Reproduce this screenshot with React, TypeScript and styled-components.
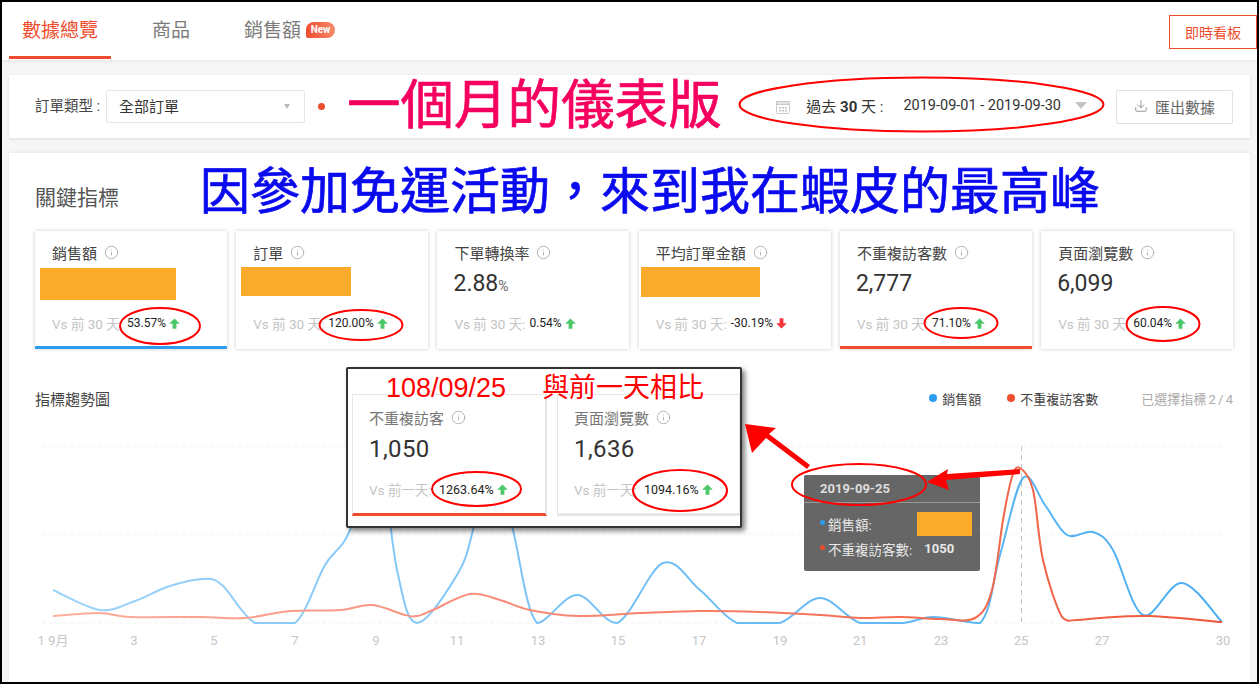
import React from 'react';
import styled, { createGlobalStyle } from 'styled-components';
import { Download, Info } from 'lucide-react';

const GlobalStyle = createGlobalStyle`
  html, body {
    margin: 0;
    padding: 0;
    background: #fff;
    overflow: hidden;
  }
  * {
    box-sizing: border-box;
  }
`;

const orange = '#ee4d2d';
const blue = '#2b9cf0';
const redact = '#fbab2a';
const sansStack = 'Roboto, "Noto Sans CJK TC", sans-serif';

type Point = [number, number];

const BASELINE = 623;

const salesLine: Point[] = [
  [53, 590], [100, 610], [135, 601], [167, 587], [202, 579], [222, 585], [255, 623], [295, 623],
  [325, 565], [350, 530], [376, 440], [397, 570], [417, 623], [457, 575], [473, 530], [492, 440],
  [513, 530], [537, 623], [577, 595], [617, 623], [663, 563], [700, 590], [737, 623], [780, 623],
  [820, 598], [860, 623], [903, 623], [933, 617], [980, 623], [1000, 555], [1023, 478], [1045, 505],
  [1067, 535], [1093, 532], [1113, 550], [1143, 615], [1182, 583], [1222, 622],
];

const visitorLine: Point[] = [
  [53, 616], [100, 613], [130, 617], [200, 617], [245, 618], [290, 611], [340, 610], [372, 605],
  [405, 615], [417, 616], [433, 610], [470, 594], [500, 600], [530, 610], [578, 616], [640, 613],
  [700, 611], [760, 612], [820, 615], [860, 618], [900, 617], [940, 619], [975, 618], [992, 590],
  [1003, 520], [1012, 477], [1020, 468], [1033, 490], [1043, 560], [1062, 617], [1077, 620],
  [1100, 618], [1150, 616], [1222, 622],
];

// catmull-rom through the points, control points kept above the axis
const toPath = (pts: Point[]) => {
  let d = `M${pts[0][0]} ${pts[0][1]}`;
  for (let i = 0; i < pts.length - 1; i++) {
    const p0 = pts[Math.max(i - 1, 0)];
    const p1 = pts[i];
    const p2 = pts[i + 1];
    const p3 = pts[Math.min(i + 2, pts.length - 1)];
    const c1x = p1[0] + (p2[0] - p0[0]) / 6;
    const c1y = Math.min(p1[1] + (p2[1] - p0[1]) / 6, BASELINE);
    const c2x = p2[0] - (p3[0] - p1[0]) / 6;
    const c2y = Math.min(p2[1] - (p3[1] - p1[1]) / 6, BASELINE);
    d += ` C${c1x.toFixed(1)} ${c1y.toFixed(1)} ${c2x.toFixed(1)} ${c2y.toFixed(1)} ${p2[0]} ${p2[1]}`;
  }
  return d;
};

const axisLabels: [string, number][] = [
  ['1 9月', 53], ['3', 134], ['5', 214], ['7', 295], ['9', 376], ['11', 457], ['13', 538], ['15', 618],
  ['17', 699], ['19', 780], ['21', 860], ['23', 941], ['25', 1021], ['27', 1102], ['30', 1223],
];

interface Metric {
  label: string;
  value?: string;
  unit?: string;
  redact?: { width: number; height: number; top: number; left: number };
  change: string;
  down?: boolean;
  bar?: string;
}

const metrics: Metric[] = [
  { label: '銷售額', redact: { width: 136, height: 32, top: 3, left: -12 }, change: '53.57%', bar: blue },
  { label: '訂單', redact: { width: 110, height: 29, top: 2, left: -12 }, change: '120.00%' },
  { label: '下單轉換率', value: '2.88', unit: '%', change: '0.54%' },
  { label: '平均訂單金額', redact: { width: 119, height: 30, top: 2, left: -15 }, change: '-30.19%', down: true },
  { label: '不重複訪客數', value: '2,777', change: '71.10%', bar: orange },
  { label: '頁面瀏覽數', value: '6,099', change: '60.04%' },
];

const ellipses = [
  [921.5, 104.5, 182, 27],
  [160, 326, 40, 18],
  [361, 325, 41.5, 15],
  [961, 323, 36.5, 15],
  [1163, 324, 36.5, 17],
  [476.5, 489, 44.5, 17],
  [680, 490.5, 47, 20.5],
  [859, 484.5, 67, 20.5],
];

const ChangeArrow = ({ down }: { down?: boolean }) => (
  <ArrowIcon viewBox="0 0 11 11" $down={down}>
    <path d="M5.5 0.5 L10.8 5.8 H7.4 V10.8 H3.6 V5.8 H0.2 Z" />
  </ArrowIcon>
);

const CalendarIcon = () => (
  <svg width="14" height="14" viewBox="0 0 14 14">
    <rect x="0.5" y="1.5" width="13" height="12" rx="1" fill="#fff" stroke="#c9c9c9" />
    <rect x="0.5" y="1.5" width="13" height="3" fill="#e2e2e2" stroke="#c9c9c9" />
    <path d="M3 7h2v1.5H3zM6 7h2v1.5H6zM9 7h2v1.5H9zM3 10h2v1.5H3zM6 10h2v1.5H6zM9 10h2v1.5H9z" fill="#c2c2c2" />
  </svg>
);

const MetricCard = ({ metric }: { metric: Metric }) => (
  <Card $bar={metric.bar}>
    <CardLabel>
      {metric.label}
      <Info size={15} strokeWidth={1.4} color="#aaa" />
    </CardLabel>
    <CardValue>
      {metric.redact ? (
        <Redaction
          $width={metric.redact.width}
          $height={metric.redact.height}
          $top={metric.redact.top}
          $left={metric.redact.left}
        />
      ) : (
        <>
          {metric.value}
          {metric.unit && <Unit>{metric.unit}</Unit>}
        </>
      )}
    </CardValue>
    <CardFooter>
      <VsText>Vs 前 30 天:</VsText>
      <ChangeText>{metric.change}</ChangeText>
      <ChangeArrow down={metric.down} />
    </CardFooter>
  </Card>
);

const Chart = () => (
  <ChartSvg viewBox="35 430 1198 220" width="1198" height="220">
    <defs>
      <linearGradient id="salesStroke" gradientUnits="userSpaceOnUse" x1="53" y1="0" x2="1222" y2="0">
        <stop offset="0" stopColor="#9cd3fa" />
        <stop offset="1" stopColor="#4aaef2" />
      </linearGradient>
      <linearGradient id="visitorStroke" gradientUnits="userSpaceOnUse" x1="53" y1="0" x2="1222" y2="0">
        <stop offset="0" stopColor="#ffae9f" />
        <stop offset="1" stopColor="#ef5638" />
      </linearGradient>
    </defs>
    {[446, 534, 623].map((y) => (
      <line key={y} x1="42" x2="1222" y1={y} y2={y} stroke="#f3f3f3" strokeDasharray="4 3" />
    ))}
    <line x1="1021.5" x2="1021.5" y1="446" y2="623" stroke="#c4c4c4" strokeDasharray="5 4" />
    <path d={toPath(salesLine)} fill="none" stroke="url(#salesStroke)" strokeWidth="2" />
    <path d={toPath(visitorLine)} fill="none" stroke="url(#visitorStroke)" strokeWidth="2" />
    {axisLabels.map(([text, x]) => (
      <AxisLabel key={text} x={x} y={645} textAnchor="middle">
        {text}
      </AxisLabel>
    ))}
  </ChartSvg>
);

const App = () => {
  return (
    <Page>
      <GlobalStyle />
      <Frame>
        <TabBar>
          <Tab $active>數據總覽</Tab>
          <Tab>商品</Tab>
          <Tab>
            銷售額
            <NewBadge>New</NewBadge>
          </Tab>
          <LiveButton>即時看板</LiveButton>
        </TabBar>

        <FilterBar>
          <FilterLabel>訂單類型 :</FilterLabel>
          <SelectBox>
            全部訂單
            <SmallCaret />
          </SelectBox>
          <StatusDot />
          <MonthNote>一個月的儀表版</MonthNote>
          <DateRange>
            <CalendarIcon />
            <DateLabel>
              過去 <b>30</b> 天 :
            </DateLabel>
            <DateValue>2019-09-01 - 2019-09-30</DateValue>
            <BigCaret />
          </DateRange>
          <ExportButton>
            <Download size={14} strokeWidth={1.5} color="#888" />
            匯出數據
          </ExportButton>
        </FilterBar>

        <MainPanel>
          <KeyRow>
            <SectionTitle>關鍵指標</SectionTitle>
            <PeakNote>因參加免運活動，來到我在蝦皮的最高峰</PeakNote>
          </KeyRow>
          <CardGrid>
            {metrics.map((metric) => (
              <MetricCard key={metric.label} metric={metric} />
            ))}
          </CardGrid>
          <TrendHeader>
            <TrendTitle>指標趨勢圖</TrendTitle>
            <Legend>
              <LegendDot $color={blue} />
              銷售額
            </Legend>
            <Legend>
              <LegendDot $color={orange} />
              不重複訪客數
            </Legend>
            <Selected>已選擇指標 2 / 4</Selected>
          </TrendHeader>
          <Chart />
        </MainPanel>
      </Frame>

      <ChartTooltip>
        <TooltipDate>2019-09-25</TooltipDate>
        <TooltipRow>
          <TooltipDot $color={blue} />
          銷售額:
          <TooltipRedaction />
        </TooltipRow>
        <TooltipRow>
          <TooltipDot $color={orange} />
          不重複訪客數:
          <TooltipValue>1050</TooltipValue>
        </TooltipRow>
      </ChartTooltip>

      <InsetShot>
        <InsetHeadline>
          <span>108/09/25</span>
          <span>與前一天相比</span>
        </InsetHeadline>
        <InsetCards>
          <InsetCard $width={195} $bar={orange}>
            <InsetLabel>
              不重複訪客
              <Info size={15} strokeWidth={1.4} color="#aaa" />
            </InsetLabel>
            <InsetValue>1,050</InsetValue>
            <InsetFooter>
              <VsText>Vs 前一天:</VsText>
              <InsetChange>1263.64%</InsetChange>
              <ChangeArrow />
            </InsetFooter>
          </InsetCard>
          <InsetCard $width={184}>
            <InsetLabel>
              頁面瀏覽數
              <Info size={15} strokeWidth={1.4} color="#aaa" />
            </InsetLabel>
            <InsetValue>1,636</InsetValue>
            <InsetFooter>
              <VsText>Vs 前一天:</VsText>
              <InsetChange>1094.16%</InsetChange>
              <ChangeArrow />
            </InsetFooter>
          </InsetCard>
        </InsetCards>
      </InsetShot>

      <Markup viewBox="0 0 1259 684" width="1259" height="684">
        {ellipses.map(([cx, cy, rx, ry]) => (
          <ellipse key={cx} cx={cx} cy={cy} rx={rx} ry={ry} fill="none" stroke="#f00" strokeWidth="2" />
        ))}
        <polygon points="1020,469 1020,474 946,480 949,490 927,482 948,469 947,474" fill="#f00" />
        <polygon points="810,465 807,469 766,438 752,453 745,424 776,428 769,434" fill="#f00" />
      </Markup>
    </Page>
  );
};

const Page = styled.div`
  position: relative;
  width: 1259px;
  height: 684px;
  overflow: hidden;
  font-family: ${sansStack};
`;

const Frame = styled.div`
  display: flex;
  flex-direction: column;
  height: 684px;
  border-style: solid;
  border-color: #000;
  border-width: 2px;
  background: #f6f6f6;
`;

const TabBar = styled.div`
  display: flex;
  gap: 28px;
  height: 58px;
  padding-left: 7px;
  background: #fff;
  box-shadow: 0 1px 3px rgba(0, 0, 0, 0.08);
`;

const Tab = styled.div<{ $active?: boolean }>`
  display: flex;
  align-items: center;
  height: 57px;
  padding: 0 13px 2px;
  font-size: 19px;
  color: ${(p) => (p.$active ? orange : '#7b7b7b')};
  border-bottom: 3px solid ${(p) => (p.$active ? orange : 'transparent')};
`;

const NewBadge = styled.span`
  align-self: flex-start;
  margin: 20px 0 0 5px;
  width: 29px;
  height: 16px;
  border-radius: 8px 8px 8px 2px;
  background: linear-gradient(90deg, #ee4d2d, #f58a6c);
  color: #fff;
  font-size: 10px;
  font-weight: 700;
  line-height: 16px;
  text-align: center;
`;

const LiveButton = styled.div`
  display: flex;
  align-items: center;
  justify-content: center;
  width: 88px;
  height: 34px;
  margin: 13px 0 0 auto;
  border: 1px solid ${orange};
  color: ${orange};
  font-size: 14px;
`;

const FilterBar = styled.div`
  display: flex;
  align-items: center;
  height: 63px;
  margin: 15px 7px 0;
  padding: 0 17px 0 26px;
  background: #fff;
  box-shadow: 0 1px 3px rgba(0, 0, 0, 0.1);
`;

const FilterLabel = styled.div`
  width: 71px;
  padding-bottom: 5px;
  font-size: 14.5px;
  color: #444;
  white-space: nowrap;
`;

const SelectBox = styled.div`
  position: relative;
  display: flex;
  align-items: center;
  width: 199px;
  height: 33px;
  padding: 0 0 3px 12px;
  border: 1px solid #e6e6e6;
  border-radius: 2px;
  font-size: 15px;
  color: #333;
`;

const SmallCaret = styled.i`
  position: absolute;
  right: 14px;
  top: 13px;
  border-style: solid;
  border-width: 5px 3.5px 0;
  border-color: #bbb transparent transparent;
`;

const StatusDot = styled.span`
  flex: none;
  width: 7px;
  height: 7px;
  margin-left: 13px;
  border-radius: 50%;
  background: ${orange};
`;

const MonthNote = styled.div`
  margin: 0 0 12px 22px;
  font-family: "Noto Sans CJK TC", sans-serif;
  font-size: 53.5px;
  font-weight: 400;
  line-height: 53px;
  -webkit-text-stroke: 0.7px #f5005f;
  color: #f5005f;
  white-space: nowrap;
`;

const DateRange = styled.div`
  display: flex;
  align-items: center;
  margin: 0 29px 0 auto;
  color: #333;
  font-size: 15px;
`;

const DateLabel = styled.span`
  margin: 0 0 3px 16px;
  white-space: nowrap;
  b {
    font-weight: 700;
  }
`;

const DateValue = styled.span`
  margin: 0 0 3px 20px;
  font-size: 14.5px;
  white-space: nowrap;
`;

const BigCaret = styled.i`
  margin: 0 0 3px 14px;
  border-style: solid;
  border-width: 7px 6px 0;
  border-color: #c4c4c4 transparent transparent;
`;

const ExportButton = styled.div`
  display: flex;
  align-items: center;
  justify-content: center;
  gap: 7px;
  width: 117px;
  height: 34px;
  padding-bottom: 1px;
  border: 1px solid #e2e2e2;
  border-radius: 2px;
  font-size: 15px;
  color: #666;
`;

const MainPanel = styled.div`
  flex: 1;
  margin: 15px 7px 0;
  padding: 14px 17px 0 26px;
  background: #fff;
  box-shadow: 0 -1px 3px rgba(0, 0, 0, 0.06);
`;

const KeyRow = styled.div`
  display: flex;
  height: 64px;
`;

const SectionTitle = styled.div`
  width: 165px;
  margin-top: 18px;
  font-size: 21px;
  line-height: 26px;
  color: #555;
`;

const PeakNote = styled.div`
  margin-top: -5px;
  font-family: "Noto Sans CJK TC", sans-serif;
  font-size: 50px;
  font-weight: 400;
  line-height: 50px;
  -webkit-text-stroke: 0.7px #0a0aee;
  color: #0a0aee;
  white-space: nowrap;
`;

const CardGrid = styled.div`
  display: grid;
  grid-template-columns: repeat(6, 1fr);
  gap: 9.4px;
`;

const Card = styled.div<{ $bar?: string }>`
  height: 118px;
  padding: 11px 0 0 17px;
  background: #fff;
  box-shadow: 0 0 4px rgba(0, 0, 0, 0.2);
  border-bottom: 3px solid ${(p) => p.$bar || 'transparent'};
`;

const CardLabel = styled.div`
  display: flex;
  align-items: center;
  gap: 7px;
  height: 20px;
  font-size: 15px;
  color: #444;
  white-space: nowrap;
`;

const CardValue = styled.div`
  height: 41px;
  padding-top: 3px;
  margin-left: -1px;
  font-size: 23px;
  line-height: 38px;
  color: #333;
`;

const Unit = styled.span`
  font-size: 14px;
  color: #666;
`;

const Redaction = styled.div<{ $width: number; $height: number; $top: number; $left: number }>`
  width: ${(p) => p.$width}px;
  height: ${(p) => p.$height}px;
  margin: ${(p) => p.$top}px 0 0 ${(p) => p.$left + 1}px;
  background: ${redact};
`;

const CardFooter = styled.div`
  display: flex;
  align-items: center;
  height: 20px;
  margin-top: 10px;
`;

const VsText = styled.span`
  width: 75px;
  flex: none;
  font-size: 13.5px;
  color: #c4c4c4;
  white-space: nowrap;
`;

const ChangeText = styled.span`
  font-size: 12px;
  color: #222;
`;

const ArrowIcon = styled.svg<{ $down?: boolean }>`
  flex: none;
  width: 11px;
  height: 11px;
  margin-left: 3px;
  fill: ${(p) => (p.$down ? '#f5333f' : '#4cc76a')};
  transform: ${(p) => (p.$down ? 'rotate(180deg)' : 'none')};
`;

const TrendHeader = styled.div`
  display: flex;
  align-items: center;
  height: 20px;
  margin-top: 39px;
  font-size: 13px;
  color: #444;
`;

const TrendTitle = styled.div`
  margin-right: auto;
  font-size: 15px;
  color: #444;
`;

const Legend = styled.div`
  display: flex;
  align-items: center;
  gap: 5px;
  margin-right: 26px;
`;

const LegendDot = styled.span<{ $color: string }>`
  width: 8px;
  height: 8px;
  border-radius: 50%;
  background: ${(p) => p.$color};
`;

const Selected = styled.div`
  margin-left: 17px;
  color: #aaa;
  word-spacing: -1px;
`;

const ChartSvg = styled.svg`
  display: block;
  margin-top: 22px;
`;

const AxisLabel = styled.text`
  font-family: ${sansStack};
  font-size: 13px;
  fill: #c6c6c6;
`;

const ChartTooltip = styled.div`
  position: absolute;
  left: 804px;
  top: 475px;
  width: 176px;
  height: 96px;
  border-radius: 2px;
  background: #666;
  color: #e8e8e8;
  font-size: 13.5px;
`;

const TooltipDate = styled.div`
  height: 28px;
  padding: 6px 0 0 16px;
  border-bottom: 1px solid #999;
  font-size: 13px;
  font-weight: 700;
  line-height: 16px;
  color: #ddd;
`;

const TooltipRow = styled.div`
  position: relative;
  display: flex;
  align-items: center;
  height: 25px;
  top: 8px;
  padding-left: 24px;
  white-space: nowrap;
`;

const TooltipDot = styled.span<{ $color: string }>`
  position: absolute;
  left: 16px;
  top: 9px;
  width: 5px;
  height: 5px;
  border-radius: 50%;
  background: ${(p) => p.$color};
`;

const TooltipRedaction = styled.span`
  position: absolute;
  left: 113px;
  top: 1px;
  width: 55px;
  height: 24px;
  background: ${redact};
`;

const TooltipValue = styled.span`
  margin-left: 12px;
  font-size: 13px;
  font-weight: 700;
`;

const InsetShot = styled.div`
  position: absolute;
  left: 346px;
  top: 367px;
  width: 396px;
  height: 161px;
  padding: 0 0 0 4px;
  border: 2px solid #333;
  border-radius: 2px;
  background: #fff;
  box-shadow: 3px 3px 5px rgba(0, 0, 0, 0.5);
  overflow: hidden;
`;

const InsetHeadline = styled.div`
  position: relative;
  z-index: 1;
  display: flex;
  gap: 36px;
  height: 27px;
  margin-top: 6px;
  padding-left: 34px;
  font-family: "Liberation Sans", "Noto Sans CJK TC", sans-serif;
  font-size: 27px;
  line-height: 27px;
  color: #f00;
  white-space: nowrap;
`;

const InsetCards = styled.div`
  display: flex;
  gap: 10px;
  margin-top: -8px;
`;

const InsetCard = styled.div<{ $width: number; $bar?: string }>`
  flex: none;
  width: ${(p) => p.$width}px;
  height: 122px;
  padding: 12px 0 0 16px;
  border: 1px solid #e6e6e6;
  border-width: 1px 2px 1px 1px;
  border-bottom: 3px solid ${(p) => p.$bar || '#e6e6e6'};
`;

const InsetLabel = styled.div`
  display: flex;
  align-items: center;
  gap: 7px;
  height: 20px;
  font-size: 15px;
  color: #777;
`;

const InsetValue = styled.div`
  height: 36px;
  margin-top: 4px;
  font-size: 24px;
  line-height: 36px;
  letter-spacing: 0.4px;
  color: #333;
`;

const InsetFooter = styled.div`
  display: flex;
  align-items: center;
  height: 20px;
  margin-top: 12px;
`;

const InsetChange = styled.span`
  margin-left: -5px;
  font-size: 12.5px;
  color: #222;
`;

const Markup = styled.svg`
  position: absolute;
  left: 0;
  top: 0;
  pointer-events: none;
`;

export default App;
